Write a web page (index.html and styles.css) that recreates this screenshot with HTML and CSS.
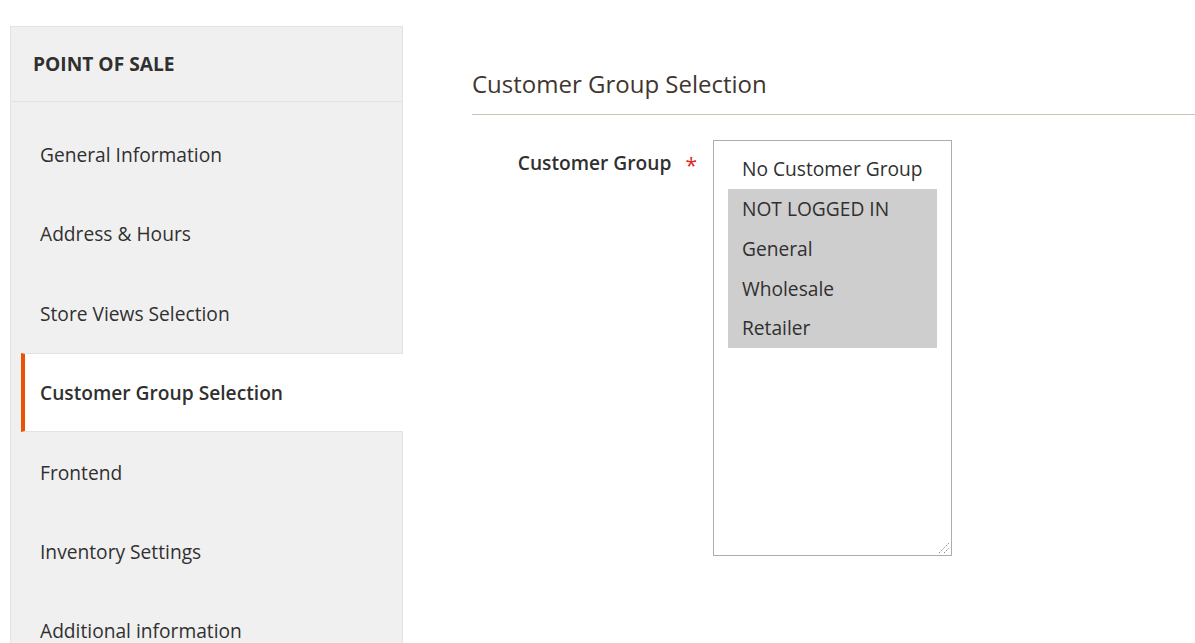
FILE: index.html
```html
<!DOCTYPE html>
<html lang="en">
<head>
<meta charset="utf-8">
<title>Point of Sale - Customer Group Selection</title>
<link rel="stylesheet" href="styles.css">
</head>
<body>
<div class="page">
  <nav class="sidebar">
    <div class="sidebar-title">POINT OF SALE</div>
    <ul class="nav-list">
      <li class="nav-item">General Information</li>
      <li class="nav-item">Address &amp; Hours</li>
      <li class="nav-item">Store Views Selection</li>
      <li class="nav-item active">Customer Group Selection</li>
      <li class="nav-item">Frontend</li>
      <li class="nav-item">Inventory Settings</li>
      <li class="nav-item">Additional information</li>
    </ul>
  </nav>
  <main class="content">
    <h2 class="section-title">Customer Group Selection</h2>
    <div class="field">
      <div class="field-label"><span class="label-text">Customer Group</span><span class="required">*</span></div>
      <div class="listbox" role="listbox" aria-multiselectable="true">
        <div class="option" role="option">No Customer Group</div>
        <div class="option selected" role="option">NOT LOGGED IN</div>
        <div class="option selected" role="option">General</div>
        <div class="option selected" role="option">Wholesale</div>
        <div class="option selected" role="option">Retailer</div>
        <svg class="grip" width="12" height="12" viewBox="0 0 12 12">
          <line x1="1" y1="11" x2="11" y2="1" stroke="#8a8a8a" stroke-width="1" stroke-dasharray="1.5 1"/>
          <line x1="6" y1="11" x2="11" y2="6" stroke="#8a8a8a" stroke-width="1" stroke-dasharray="1.5 1"/>
        </svg>
      </div>
    </div>
  </main>
</div>
</body>
</html>
```
FILE: styles.css
```css
html, body {
  margin: 0;
  padding: 0;
  background: #ffffff;
}
body {
  font-family: "Open Sans", "Noto Sans", "Liberation Sans", sans-serif;
  color: #303030;
  overflow: hidden;
  height: 643px;
}
.page {
  display: flex;
  align-items: flex-start;
}
.sidebar {
  margin: 26px 0 0 10px;
  width: 391px;
  border: 1px solid #e3e3e3;
  background: #f0f0f0;
  height: 700px;
  flex: none;
}
.sidebar-title {
  box-sizing: border-box;
  height: 75px;
  display: flex;
  align-items: center;
  padding-left: 22px;
  padding-bottom: 1px;
  font-size: 19.2px;
  font-weight: 700;
  color: #303030;
  border-bottom: 1px solid #e3e3e3;
}
.nav-list {
  list-style: none;
  margin: 12.8px 0 0 0;
  padding: 0;
}
.nav-item {
  box-sizing: border-box;
  height: 79.4px;
  display: flex;
  align-items: center;
  margin-left: 10px;
  padding-left: 15px;
  border-left: 4px solid transparent;
  border-top: 1px solid transparent;
  border-bottom: 1px solid transparent;
  font-size: 19.2px;
  color: #303030;
}
.nav-item.active {
  background: #ffffff;
  border-left-color: #eb5202;
  border-top-color: #e3e3e3;
  border-bottom-color: #e3e3e3;
  margin-right: -1px;
  font-weight: 600;
}
.content {
  flex: 1;
  margin-left: 69px;
  padding-top: 66px;
}
.section-title {
  margin: 0;
  font-size: 24px;
  font-weight: 400;
  line-height: 36px;
  color: #41362f;
  padding-bottom: 12px;
  border-bottom: 1px solid #cac3b4;
}
.field {
  display: flex;
  align-items: flex-start;
  margin-top: 25px;
}
.field-label {
  width: 241px;
  flex: none;
  display: flex;
  justify-content: flex-end;
  align-items: center;
  padding-top: 9px;
  font-size: 19.2px;
  font-weight: 600;
  color: #303030;
}
.required {
  color: #e22626;
  font-weight: 400;
  font-size: 21px;
  margin-left: 14px;
  margin-right: 16px;
  line-height: 1;
  position: relative;
  top: 3px;
}
.listbox {
  position: relative;
  box-sizing: border-box;
  width: 239px;
  height: 416px;
  border: 1px solid #adadad;
  padding: 8px 14px 0 14px;
  background: #ffffff;
}
.option {
  height: 39.75px;
  display: flex;
  align-items: center;
  padding-left: 14px;
  font-size: 19.2px;
  color: #303030;
}
.option.selected {
  background: #cecece;
}
.grip {
  position: absolute;
  right: 1px;
  bottom: 1px;
}
```
